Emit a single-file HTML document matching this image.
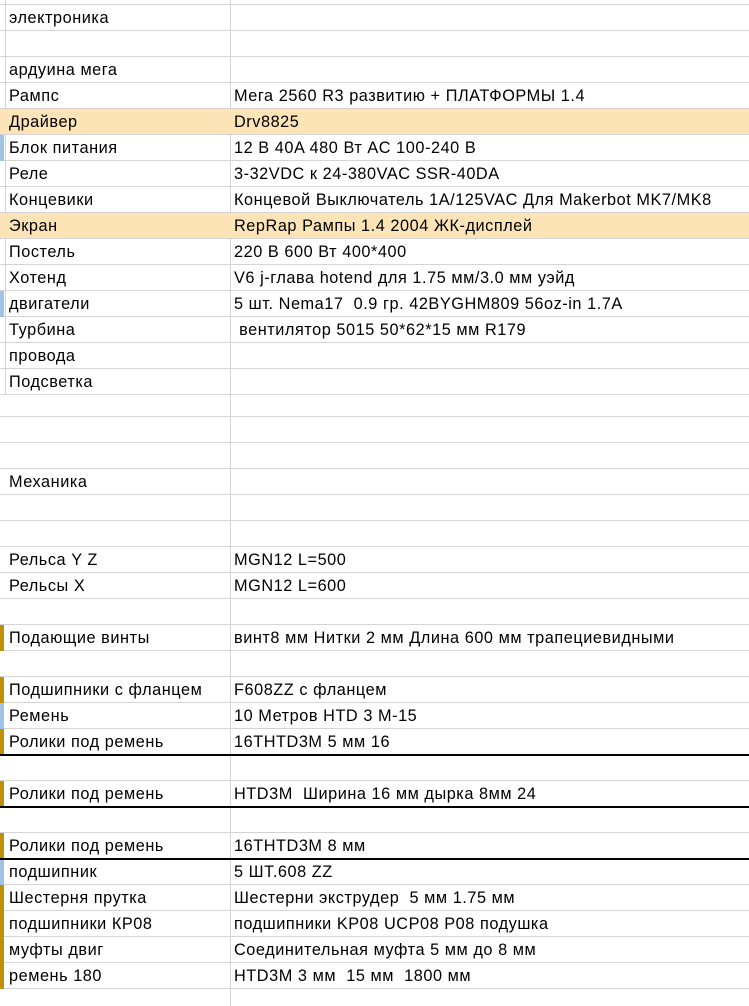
<!DOCTYPE html>
<html><head><meta charset="utf-8"><style>
body{margin:0;width:749px;height:1006px;overflow:hidden;background:#fff;position:relative;font-family:"Liberation Sans","DejaVu Sans",sans-serif;font-size:16.3px;letter-spacing:0.55px;color:#000}
.r{position:absolute;left:0;width:749px;border-bottom:1px solid #d4d4d4;box-sizing:border-box}
.r span{position:absolute;top:50%;transform:translateY(-48%);white-space:nowrap}
.a{left:9px}.b{left:234px}
.hl{background:#fce4b6}
.m{position:absolute;left:0;width:4px;top:0;bottom:-1px}
.bl{background:#9dc3e6}.gd{background:#bf9000}
.v{position:absolute;top:0;width:1px;background:#d4d4d4}
.th{position:absolute;left:0;width:749px;height:2px;background:#000}
</style></head><body>
<div class="v" style="left:5px;height:395px"></div>
<div class="v" style="left:230px;height:1006px"></div>
<div class="r" style="top:0;height:5px"></div>
<div class="r" style="top:5px;height:26px"><span class="a">электроника</span></div>
<div class="r" style="top:31px;height:26px"></div>
<div class="r" style="top:57px;height:26px"><span class="a">ардуина мега</span></div>
<div class="r" style="top:83px;height:26px"><span class="a">Рампс</span><span class="b">Мега 2560 R3 развитию + ПЛАТФОРМЫ 1.4</span></div>
<div class="r hl" style="top:109px;height:26px"><span class="a">Драйвер</span><span class="b">Drv8825</span></div>
<div class="r" style="top:135px;height:26px"><div class="m bl"></div><span class="a">Блок питания</span><span class="b">12 В 40A 480 Вт AC 100-240 В</span></div>
<div class="r" style="top:161px;height:26px"><span class="a">Реле</span><span class="b">3-32VDC к 24-380VAC SSR-40DA</span></div>
<div class="r" style="top:187px;height:26px"><span class="a">Концевики</span><span class="b">Концевой Выключатель 1A/125VAC Для Makerbot MK7/MK8</span></div>
<div class="r hl" style="top:213px;height:26px"><span class="a">Экран</span><span class="b">RepRap Рампы 1.4 2004 ЖК-дисплей</span></div>
<div class="r" style="top:239px;height:26px"><span class="a">Постель</span><span class="b">220 В 600 Вт 400*400</span></div>
<div class="r" style="top:265px;height:26px"><span class="a">Хотенд</span><span class="b">V6 j-глава hotend для 1.75 мм/3.0 мм уэйд</span></div>
<div class="r" style="top:291px;height:26px"><div class="m bl"></div><span class="a">двигатели</span><span class="b">5 шт. Nema17&nbsp; 0.9 гр. 42BYGHM809 56oz-in 1.7A</span></div>
<div class="r" style="top:317px;height:26px"><span class="a">Турбина</span><span class="b">&nbsp;вентилятор 5015 50*62*15 мм R179</span></div>
<div class="r" style="top:343px;height:26px"><span class="a">провода</span></div>
<div class="r" style="top:369px;height:26px"><span class="a">Подсветка</span></div>
<div class="r" style="top:395px;height:22px"></div>
<div class="r" style="top:417px;height:26px"></div>
<div class="r" style="top:443px;height:26px"></div>
<div class="r" style="top:469px;height:26px"><span class="a">Механика</span></div>
<div class="r" style="top:495px;height:26px"></div>
<div class="r" style="top:521px;height:26px"></div>
<div class="r" style="top:547px;height:26px"><span class="a">Рельса Y Z</span><span class="b">MGN12 L=500</span></div>
<div class="r" style="top:573px;height:26px"><span class="a">Рельсы X</span><span class="b">MGN12 L=600</span></div>
<div class="r" style="top:599px;height:26px"></div>
<div class="r" style="top:625px;height:26px"><div class="m gd"></div><span class="a">Подающие винты</span><span class="b">винт8 мм Нитки 2 мм Длина 600 мм трапециевидными</span></div>
<div class="r" style="top:651px;height:26px"></div>
<div class="r" style="top:677px;height:26px"><div class="m gd"></div><span class="a">Подшипники с фланцем</span><span class="b">F608ZZ с фланцем</span></div>
<div class="r" style="top:703px;height:26px"><div class="m bl"></div><span class="a">Ремень</span><span class="b">10 Метров HTD 3 M-15</span></div>
<div class="r" style="top:729px;height:26px"><div class="m gd"></div><span class="a">Ролики под ремень</span><span class="b">16THTD3M 5 мм 16</span></div>
<div class="r" style="top:755px;height:26px"></div>
<div class="r" style="top:781px;height:26px"><div class="m gd"></div><span class="a">Ролики под ремень</span><span class="b">HTD3M&nbsp; Ширина 16 мм дырка 8мм 24</span></div>
<div class="r" style="top:807px;height:26px"></div>
<div class="r" style="top:833px;height:26px"><div class="m gd"></div><span class="a">Ролики под ремень</span><span class="b">16THTD3M 8 мм</span></div>
<div class="r" style="top:859px;height:26px"><div class="m bl"></div><span class="a">подшипник</span><span class="b">5 ШТ.608 ZZ</span></div>
<div class="r" style="top:885px;height:26px"><div class="m gd"></div><span class="a">Шестерня прутка</span><span class="b">Шестерни экструдер&nbsp; 5 мм 1.75 мм</span></div>
<div class="r" style="top:911px;height:26px"><div class="m gd"></div><span class="a">подшипники КР08</span><span class="b">подшипники KP08 UCP08 P08 подушка</span></div>
<div class="r" style="top:937px;height:26px"><div class="m gd"></div><span class="a">муфты двиг</span><span class="b">Соединительная муфта 5 мм до 8 мм</span></div>
<div class="r" style="top:963px;height:26px"><div class="m gd"></div><span class="a">ремень 180</span><span class="b">HTD3M 3 мм&nbsp; 15 мм&nbsp; 1800 мм</span></div>
<div class="r" style="top:989px;height:17px;border:none"></div>
<div class="th" style="top:754px"></div>
<div class="th" style="top:806px"></div>
<div class="th" style="top:858px"></div>
</body></html>
